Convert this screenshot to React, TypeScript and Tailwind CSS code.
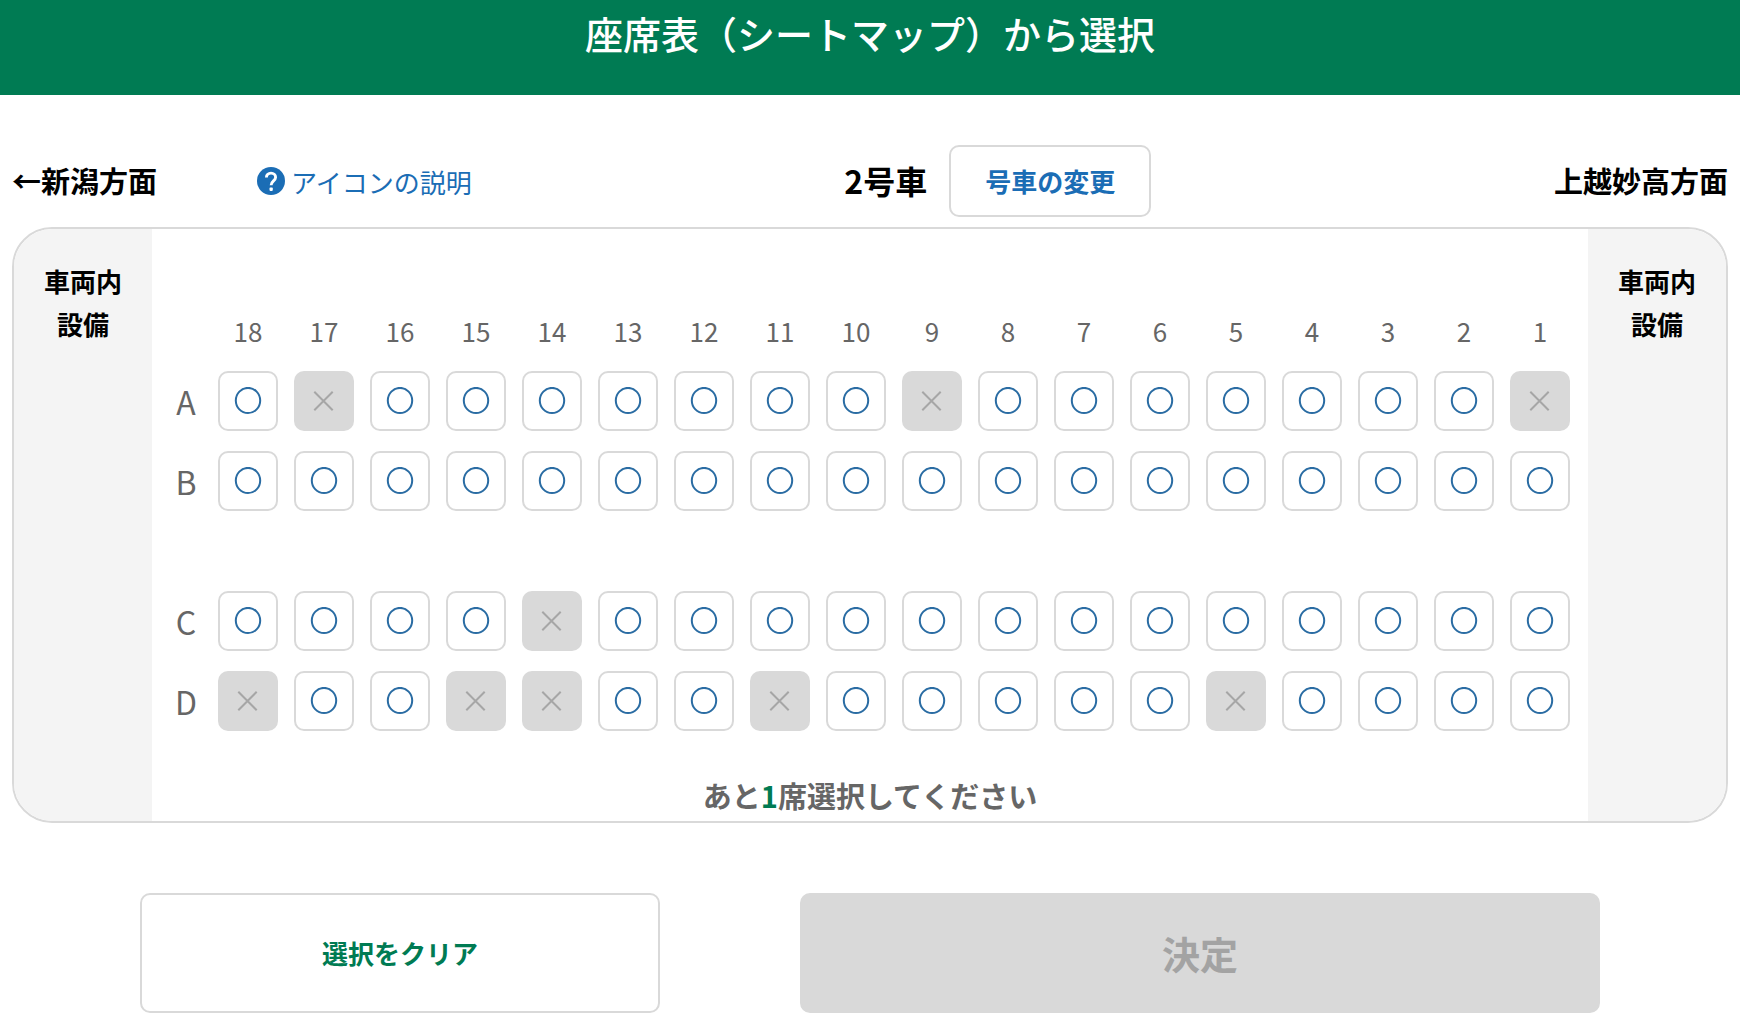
import { useState } from "react";

const COLUMNS = [18, 17, 16, 15, 14, 13, 12, 11, 10, 9, 8, 7, 6, 5, 4, 3, 2, 1];

const ROWS: { name: string; taken: number[]; className: string }[] = [
  { name: "A", taken: [17, 9, 1], className: "mt-5" },
  { name: "B", taken: [], className: "mt-5" },
  { name: "C", taken: [14], className: "mt-20" },
  { name: "D", taken: [18, 15, 14, 11, 5], className: "mt-5" },
];

function HelpIcon() {
  return (
    <svg viewBox="0 0 28 28" className="size-7 shrink-0" aria-hidden="true">
      <circle cx="14" cy="14" r="14" fill="#1b6db5" />
      <path
        d="M9.4 10.4C9.4 7.8 11.4 6.1 14 6.1c2.6 0 4.6 1.7 4.6 4.2 0 3.6-4.5 3.7-4.5 8"
        fill="none"
        stroke="#fff"
        strokeWidth="2.9"
      />
      <rect x="12.5" y="20.6" width="3.3" height="3.3" rx="0.8" fill="#fff" />
    </svg>
  );
}

function Seat({ name, taken, selected, onSelect }: { name: string; taken: boolean; selected: boolean; onSelect: () => void }) {
  if (taken) {
    return (
      <button type="button" disabled aria-label={name} className="flex size-[60px] items-center justify-center rounded-[10px] bg-[#d9d9d9]">
        <svg viewBox="0 0 28 28" className="size-7" aria-hidden="true">
          <path d="M4.3 4.8 22.7 23.2M22.7 4.8 4.3 23.2" stroke="#a6a6a6" strokeWidth="2" />
        </svg>
      </button>
    );
  }
  return (
    <button
      type="button"
      aria-label={name}
      aria-pressed={selected}
      onClick={onSelect}
      className="flex size-[60px] items-center justify-center rounded-[10px] border-2 border-[#d9d9d9] bg-white aria-pressed:bg-sky-100"
    >
      <svg viewBox="0 0 28 28" className="size-7" aria-hidden="true">
        <ellipse cx="14" cy="13.5" rx="12.2" ry="12.6" fill="none" stroke="#2a6ca3" strokeWidth="2" />
      </svg>
    </button>
  );
}

function Facilities() {
  return (
    <div className="w-[138px] shrink-0 bg-[#f4f4f4] pt-[30px] text-center text-[26px] leading-[43px] font-bold">
      車両内
      <br />
      設備
    </div>
  );
}

export default function App() {
  const [selected, setSelected] = useState("");
  return (
    <div className="min-h-screen bg-white font-['Noto_Sans_CJK_JP',sans-serif] text-black">
      <header className="bg-[#007b53] pt-[6px] pb-[35px]">
        <h1 className="text-center text-[38px] leading-[54px] font-medium text-white">座席表（シートマップ）から選択</h1>
      </header>

      <main className="px-3 pt-[50px] pb-2">
        <div className="flex items-center">
          <div className="flex w-[48.5%] items-center gap-[100px]">
            <p className="pb-[2px] text-[29px] leading-[43px] font-bold">←新潟方面</p>
            <a href="#icons" className="flex items-center gap-[6px] text-[26px] leading-[43px] text-[#1b6db5]">
              <HelpIcon />
              アイコンの説明
            </a>
          </div>
          <div className="flex items-center gap-[22px]">
            <h2 className="pb-[2px] text-[32px] leading-[48px] font-bold">2号車</h2>
            <button type="button" className="h-[72px] rounded-[10px] border-2 border-[#d9d9d9] px-[34px] pb-[2px] text-[26px] font-bold text-[#1b6db5]">
              号車の変更
            </button>
          </div>
          <p className="ml-auto pb-[2px] text-[29px] leading-[43px] font-bold">上越妙高方面</p>
        </div>

        <section className="mt-[10px] flex overflow-hidden rounded-[40px] border-2 border-[#d9d9d9]">
          <Facilities />
          <div className="grow pt-[82px] pb-[2px] text-[#666]">
            <div className="flex pr-[18px] pl-[66px]">
              <div className="flex grow justify-between text-center text-[26px] leading-10">
                {COLUMNS.map((column) => (
                  <span key={column} className="w-[60px]">
                    {column}
                  </span>
                ))}
              </div>
            </div>
            {ROWS.map((row) => (
              <div key={row.name} className={"flex items-center pr-[18px] " + row.className}>
                <span className="w-[66px] pl-[2px] text-center text-[32px] leading-[60px]">{row.name}</span>
                <div className="flex grow justify-between">
                  {COLUMNS.map((column) => {
                    const seat = column + row.name;
                    return (
                      <Seat
                        key={seat}
                        name={seat}
                        taken={row.taken.includes(column)}
                        selected={selected === seat}
                        onSelect={() => setSelected(seat)}
                      />
                    );
                  })}
                </div>
              </div>
            ))}
            <p className="mt-[41px] pb-px text-center text-[29px] leading-[46px] font-bold">
              あと<span className="text-[#007b53]">1</span>席選択してください
            </p>
          </div>
          <Facilities />
        </section>

        <div className="mt-[70px] flex gap-[140px] px-32">
          <button
            type="button"
            onClick={() => setSelected("")}
            className="h-[120px] w-[13px] grow-[13] rounded-[10px] border-2 border-[#d9d9d9] bg-white pb-[2px] text-[26px] font-bold text-[#007b53]"
          >
            選択をクリア
          </button>
          <button type="button" disabled className="h-[120px] w-5 grow-[20] rounded-[10px] border-2 border-[#d9d9d9] bg-[#d9d9d9] pb-[2px] text-[38px] font-bold text-[#a3a3a3]">
            決定
          </button>
        </div>
      </main>
    </div>
  );
}
